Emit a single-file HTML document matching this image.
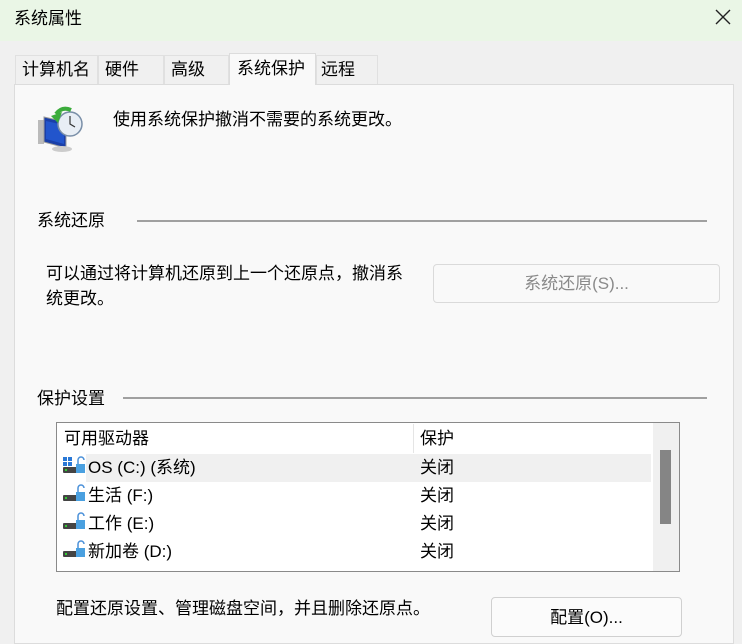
<!DOCTYPE html>
<html><head><meta charset="utf-8"><style>
*{margin:0;padding:0;box-sizing:border-box}
body{width:742px;height:630px;overflow:hidden;background:#f0f0f0;font-family:"Liberation Sans","Noto Sans CJK SC",sans-serif;font-size:17px;line-height:20px;color:#000;position:relative}
.a{position:absolute;white-space:nowrap}
.title{left:0;top:0;width:742px;height:41px;background:#eaf6e6}
.tab{position:absolute;top:55px;height:29px;border:1px solid #e0e0e0;border-bottom:none;background:#f0f0f0;padding:4px 0 0 6px}
.panel{left:14px;top:84px;width:720px;height:560px;background:#f9f9f9;border:1px solid #dcdcdc}
.line{position:absolute;height:2px;background:#a0a0a0}
.btn{position:absolute;border:1px solid #dadada;border-radius:4px;background:#f9f9f9;text-align:center}
</style></head><body>
<div class="a title"></div>
<div class="a" style="left:14px;top:9px">系统属性</div>
<svg class="a" style="left:714px;top:8px" width="18" height="18"><path d="M2 2L16 16M16 2L2 16" stroke="#222" stroke-width="1.4"/></svg>
<div class="a panel"></div>
<div class="tab" style="left:15px;width:83px">计算机名</div>
<div class="tab" style="left:98px;width:66px">硬件</div>
<div class="tab" style="left:164px;width:65px">高级</div>
<div class="tab" style="left:316px;width:62px;padding-left:4px">远程</div>
<div class="tab" style="left:229px;top:53px;height:32px;width:87px;background:#f9f9f9;border-color:#dcdcdc;padding-left:7px;padding-top:5px">系统保护</div>
<svg class="a" style="left:36px;top:104px" width="50" height="50">
<rect x="2" y="16" width="6" height="24" fill="#bbb"/>
<path d="M8 13L30 18L30 44L8 38Z" fill="#1a3fa8" stroke="#999"/>
<path d="M10 17L28 21L28 40L10 35Z" fill="#2255cc"/>
<ellipse cx="26" cy="45" rx="10" ry="3" fill="#ccc"/>
<circle cx="34" cy="20" r="12" fill="#e8eef5" stroke="#7a8fa8" stroke-width="1.5"/>
<path d="M34 12V20L39 23" stroke="#333" fill="none" stroke-width="1.2"/>
<path d="M20 10Q26 2 35 6" stroke="#3cac3c" stroke-width="4" fill="none"/>
<path d="M15 12L26 8L22 19Z" fill="#3cac3c"/>
</svg>
<div class="a" style="left:113px;top:110px">使用系统保护撤消不需要的系统更改。</div>
<div class="a" style="left:37px;top:211px">系统还原</div>
<div class="line" style="left:137px;top:220px;width:570px"></div>
<div class="a" style="left:46px;top:261px;line-height:25px">可以通过将计算机还原到上一个还原点，撤消系<br>统更改。</div>
<div class="btn" style="left:433px;top:264px;width:287px;height:39px;line-height:37px;color:#8a8a8a">系统还原(S)...</div>
<div class="a" style="left:37px;top:389px">保护设置</div>
<div class="line" style="left:123px;top:397px;width:584px"></div>
<div class="a" style="left:56px;top:422px;width:624px;height:150px;background:#fff;border:1px solid #8a8a8a"></div>
<div class="a" style="left:413px;top:424px;width:1px;height:29px;background:#e5e5e5"></div>
<div class="a" style="left:653px;top:423px;width:26px;height:148px;background:#f0f0f0"></div>
<div class="a" style="left:660px;top:450px;width:11px;height:74px;background:#858585"></div>
<div class="a" style="left:64px;top:429px">可用驱动器</div>
<div class="a" style="left:420px;top:429px">保护</div>
<div class="a" style="left:86px;top:454px;width:565px;height:28px;background:#f0f0f0"></div>
<svg class="a" style="left:62px;top:456px" width="24" height="110">
<g fill="#2a78d6"><rect x="1" y="1" width="4" height="4"/><rect x="6" y="1" width="4" height="4"/><rect x="1" y="6" width="4" height="4"/><rect x="6" y="6" width="4" height="4"/></g>
<g id="d"><rect x="1" y="11" width="20" height="6" rx="1" fill="#444"/><rect x="3" y="13" width="2" height="2" fill="#3c3"/><path d="M16 9V4a3 3 0 0 1 6 0" stroke="#4a90d9" stroke-width="1.5" fill="none"/><rect x="14" y="8" width="9" height="9" fill="#4aa0e0"/></g>
<use href="#d" y="28"/><use href="#d" y="56"/><use href="#d" y="84"/>
</svg>
<div class="a" style="left:88px;top:458px">OS (C:) (系统)</div>
<div class="a" style="left:88px;top:486px">生活 (F:)</div>
<div class="a" style="left:88px;top:514px">工作 (E:)</div>
<div class="a" style="left:88px;top:542px">新加卷 (D:)</div>
<div class="a" style="left:420px;top:458px">关闭</div>
<div class="a" style="left:420px;top:486px">关闭</div>
<div class="a" style="left:420px;top:514px">关闭</div>
<div class="a" style="left:420px;top:542px">关闭</div>
<div class="a" style="left:56px;top:599px">配置还原设置、管理磁盘空间，并且删除还原点。</div>
<div class="btn" style="left:491px;top:597px;width:191px;height:40px;line-height:40px;border-color:#d0d0d0;background:#fbfbfb">配置(O)...</div>
</body></html>
